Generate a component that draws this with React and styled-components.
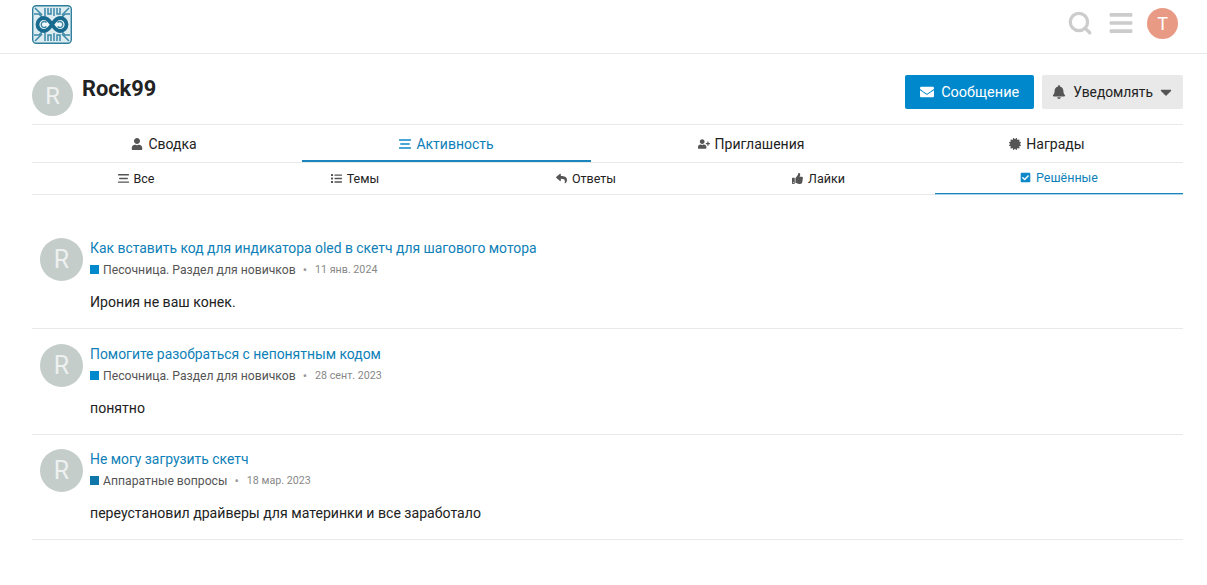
import React from "react";
import styled, { createGlobalStyle } from "styled-components";
import { FaUser, FaUserPlus, FaCertificate, FaList, FaReply, FaThumbsUp, FaCheckSquare, FaEnvelope, FaBell, FaCaretDown, FaBars } from "react-icons/fa";
import { Search } from "lucide-react";

const Global = createGlobalStyle`
  html, body { margin: 0; padding: 0; background: #fff; }
  body { font-family: Roboto, "Liberation Sans", Arial, sans-serif; color: #222; font-size: 14px; }
`;
const Page = styled.div`width: 1207px; height: 585px; overflow: hidden; background: #fff;`;
const Header = styled.header`
  height: 53px; border-bottom: 1px solid #e9e9e9; padding: 0 29px 0 32px;
  display: flex; align-items: center; justify-content: space-between;
`;
const Logo = styled.svg`width: 40px; height: 39px; display: block; margin-top: -5px;`;
const HeaderIcons = styled.div`display: flex; align-items: center; color: #ccc; margin-top: -7px;`;
const HeaderIcon = styled.span`display: flex; width: 26px; height: 26px; margin-right: ${p => p.$mr}px; align-items: center; justify-content: center;`;
const UserAvatar = styled.div`
  width: 31px; height: 31px; border-radius: 50%; background: #e99a84; color: #fff;
  display: flex; align-items: center; justify-content: center; font-size: 18px; margin-left: 3px;
`;
const Main = styled.main`margin: 0 24px 0 32px;`;
const Profile = styled.section`
  height: 70px; border-bottom: 1px solid #e9e9e9; display: flex; justify-content: space-between;
`;
const NameBlock = styled.div`display: flex; padding-top: 21px; gap: 9px;`;
const Avatar = styled.div`
  width: ${p => p.$size}px; height: ${p => p.$size}px; flex: none; border-radius: 50%; background: #c4cdca; color: #eef1f0;
  display: flex; align-items: center; justify-content: center; font-size: ${p => p.$size * 0.58}px;
`;
const Name = styled.h1`margin: 0; font-size: 21.8px; line-height: 28px; font-weight: 700; color: #222;`;
const Actions = styled.div`display: flex; gap: 8px; padding-top: 21px;`;
const Button = styled.button`
  height: 34px; border: 0; border-radius: 2px; padding: 0 ${p => p.$primary ? 15 : 8}px 0 ${p => p.$primary ? 15 : 10}px; display: flex; align-items: center; gap: 7px;
  font: 400 ${p => p.$primary ? 14.5 : 13.8}px Roboto, "Liberation Sans", sans-serif;
  background: ${p => p.$primary ? "#0088cc" : "#e9e9e9"}; color: ${p => p.$primary ? "#fff" : "#222"};
  svg { color: ${p => p.$primary ? "#fff" : "#555"}; flex: none; }
`;
const Caret = styled(FaCaretDown)`margin-left: -3px;`;
const TabBar = styled.nav`
  display: grid; grid-template-columns: ${p => p.$cols}; height: ${p => p.$h}px; border-bottom: 1px solid #e9e9e9;
`;
const Tab = styled.a`
  display: flex; align-items: center; justify-content: center; gap: 5px;
  font-size: ${p => p.$fs}px; color: ${p => p.$active ? "#0e7fb8" : "#222"};
  border-bottom: ${p => p.$active ? `${p.$bar}px solid #1a86bd` : "0"};
  padding: ${p => p.$pt}px ${p => p.$pr || 0}px ${p => p.$active ? p.$activePb : p.$bar}px 0;
  box-shadow: ${p => p.$active && p.$bar === 1 ? "0 1px 0 #a9d3e8" : "none"};
  svg { color: ${p => p.$active ? "#0e88c8" : "#555"}; }
`;
const Feed = styled.div`padding-top: 28px;`;
const Post = styled.article`
  box-sizing: border-box; border-bottom: 1px solid #e9e9e9; padding: ${p => p.$pt}px 8px 0; display: flex; gap: 7px;
  height: ${p => p.$h}px;
`;
const PostBody = styled.div`display: flex; flex-direction: column;`;
const Title = styled.a`font-size: 13.9px; line-height: 20px; color: #0e7fb8;`;
const Meta = styled.div`display: flex; align-items: center; height: 17px; margin-top: 3px; font-size: 12.2px; color: #555;`;
const Swatch = styled.span`width: 9px; height: 9px; background: ${p => p.$c}; margin-right: 4px;`;
const Dot = styled.span`margin: 0 8px 0 7px; color: #999; font-size: 13px;`;
const DateText = styled.span`font-size: 10.7px; color: #888;`;
const Excerpt = styled.p`margin: 14px 0 0; font-size: 14.1px; line-height: 20px; color: #222;`;

const LinesIcon = ({ size }) => (
  <svg width={size} height={size} viewBox="0 0 12 12" fill="currentColor">
    <rect x="0" y="1.2" width="12" height="1.5" rx="0.4" />
    <rect x="1.2" y="5.2" width="9.600" height="1.5" rx="0.4" />
    <rect x="0" y="9.2" width="12" height="1.5" rx="0.4" />
  </svg>
);

const LogoMark = () => (
  <Logo viewBox="0 0 40 39">
    <rect x="0.7" y="0.7" width="38.6" height="37.6" rx="3.5" fill="#dcecf1" stroke="#2f7f9c" strokeWidth="1.4" />
    <g stroke="#3a88a6" strokeWidth="1.5" fill="none">
      <path d="M3 3l7 7M37 3l-7 7M3 36l7-7M37 36l-7-7" />
      <path d="M13 3v8M16 3v6h3V3M22 3v8M25 3v6h3V3M13 36v-8M16 36v-6h3v6M22 36v-8M25 36v-6h3v6" />
      <path d="M2 9h5l3 3M2 30h5l3-3M38 9h-5l-3 3M38 30h-5l-3-3" />
    </g>
    <path d="M20 19.5c-2.500-3.800-4.500-6.500-8-6.500a6.500 6.500 0 0 0 0 13c3.500 0 5.500-2.700 8-6.500s4.500-6.500 8-6.500a6.500 6.500 0 0 1 0 13c-3.500 0-5.500-2.700-8-6.500z" fill="#f2f8fa" stroke="#186a8e" strokeWidth="3.800" />
    <path d="M14.500 17.500a3 3 0 1 0 0 4M25.500 17.500a3 3 0 1 1 0 4" fill="none" stroke="#3a88a6" strokeWidth="1.400" />
  </Logo>
);

const mainTabs = [
  [FaUser, "Сводка", false, 6], [LinesIcon, "Активность", true], [FaUserPlus, "Приглашения"], [FaCertificate, "Награды"],
];
const subTabs = [
  [LinesIcon, "Все"], [FaList, "Темы"], [FaReply, "Ответы"], [FaThumbsUp, "Лайки"], [FaCheckSquare, "Решённые", true],
];
const posts = [
  { t: "Как вставить код для индикатора oled в скетч для шагового мотора", c: "Песочница. Раздел для новичков", d: "11 янв. 2024", x: "Ирония не ваш конек.", s: "#0088cc", pt: 15, h: 106 },
  { t: "Помогите разобраться с непонятным кодом", c: "Песочница. Раздел для новичков", d: "28 сент. 2023", x: "понятно", s: "#0088cc", pt: 15, h: 106 },
  { t: "Не могу загрузить скетч", c: "Аппаратные вопросы", d: "18 мар. 2023", x: "переустановил драйверы для материнки и все заработало", s: "#0e76a8", pt: 14, h: 105 },
];

export default function App() {
  return (
    <Page>
      <Global />
      <Header>
        <LogoMark />
        <HeaderIcons>
          <HeaderIcon $mr={15}><Search size={30} strokeWidth={3} /></HeaderIcon>
          <HeaderIcon $mr={10}><FaBars size={26} /></HeaderIcon>
          <UserAvatar>T</UserAvatar>
        </HeaderIcons>
      </Header>
      <Main>
        <Profile>
          <NameBlock>
            <Avatar $size={41}>R</Avatar>
            <Name>Rock99</Name>
          </NameBlock>
          <Actions>
            <Button $primary><FaEnvelope size={14} />Сообщение</Button>
            <Button><FaBell size={14} />Уведомлять<Caret size={18} /></Button>
          </Actions>
        </Profile>
        <TabBar $cols="270px 289px 320px 272px" $h={37}>
          {mainTabs.map(([I, label, active, pr]) => (
            <Tab key={label} $active={active} $fs={14} $bar={2} $pt={2} $activePb={0} $pr={pr}><I size={12} />{label}</Tab>
          ))}
        </TabBar>
        <TabBar $cols="208px 230px 232px 233px 248px" $h={31}>
          {subTabs.map(([I, label, active]) => (
            <Tab key={label} $active={active} $fs={12.5} $bar={1} $pt={0} $activePb={1}><I size={11} />{label}</Tab>
          ))}
        </TabBar>
        <Feed>
          {posts.map(p => (
            <Post key={p.t} $pt={p.pt} $h={p.h}>
              <Avatar $size={43}>R</Avatar>
              <PostBody>
                <Title>{p.t}</Title>
                <Meta><Swatch $c={p.s} />{p.c}<Dot>•</Dot><DateText>{p.d}</DateText></Meta>
                <Excerpt>{p.x}</Excerpt>
              </PostBody>
            </Post>
          ))}
        </Feed>
      </Main>
    </Page>
  );
}
